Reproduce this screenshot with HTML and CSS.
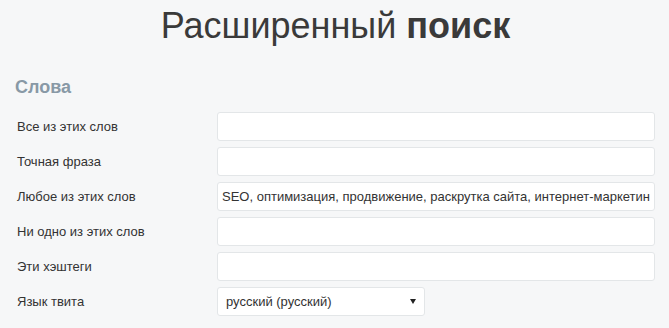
FILE: index.html
```html
<!DOCTYPE html>
<html lang="ru">
<head>
    <meta charset="UTF-8">
    <title>Расширенный поиск</title>
    <link rel="stylesheet" href="styles.css">
</head>
<body>
    <h1 class="title">Расширенный <b>поиск</b></h1>

    <!-- Слова -->
    <h2 class="section">Слова</h2>
    <div class="form">
        <label class="row">
            <span class="label">Все из этих слов</span>
            <input class="field" type="text">
        </label>
        <label class="row">
            <span class="label">Точная фраза</span>
            <input class="field" type="text">
        </label>
        <label class="row">
            <span class="label">Любое из этих слов</span>
            <input class="field" type="text" value="SEO, оптимизация, продвижение, раскрутка сайта, интернет-маркетинг">
        </label>
        <label class="row">
            <span class="label">Ни одно из этих слов</span>
            <input class="field" type="text">
        </label>
        <label class="row">
            <span class="label">Эти хэштеги</span>
            <input class="field" type="text">
        </label>
        <label class="row">
            <span class="label">Язык твита</span>
            <span class="select">
                <span>русский (русский)</span>
                <span class="arrow"></span>
            </span>
        </label>
    </div>
</body>
</html>
```

FILE: styles.css
```css
:root {
    --bgc: #f6f7f8;
    --bc: #e3e6e8;
    --text: #333;
    --muted: #8899a6;
}
* { box-sizing: border-box; }
body {
    margin: 0;
    padding: 0 14px 0 16px;
    background-color: var(--bgc);
    font-family: "Liberation Sans", Arial, sans-serif;
    color: var(--text);
}
.title {
    margin: 5px 0 0;
    text-align: center;
    font-size: 36px;
    font-weight: normal;
    line-height: 42px;
    color: #3a3a3a;
}
.section {
    margin: 28px 0 0 -1px;
    font-size: 18px;
    line-height: 24px;
    color: var(--muted);
}
.form {
    margin-top: 13px;
    display: flex;
    flex-direction: column;
    gap: 6px;
}
.row {
    display: grid;
    grid-template-columns: 201px 1fr;
    align-items: center;
    font-size: 13px;
}
.label { padding-left: 1px; }
.field, .select {
    height: 29px;
    border: 1px solid var(--bc);
    border-radius: 3px;
    background-color: #fff;
    font: inherit;
    color: var(--text);
}
.field { width: 100%; padding: 0 4px; outline: none; }
.select {
    width: 208px;
    padding: 0 8px 0 8px;
    display: flex;
    align-items: center;
    justify-content: space-between;
}
.arrow {
    width: 0;
    height: 0;
    border-left: 3px solid transparent;
    border-right: 3px solid transparent;
    border-top: 5px solid #222;
}
```
